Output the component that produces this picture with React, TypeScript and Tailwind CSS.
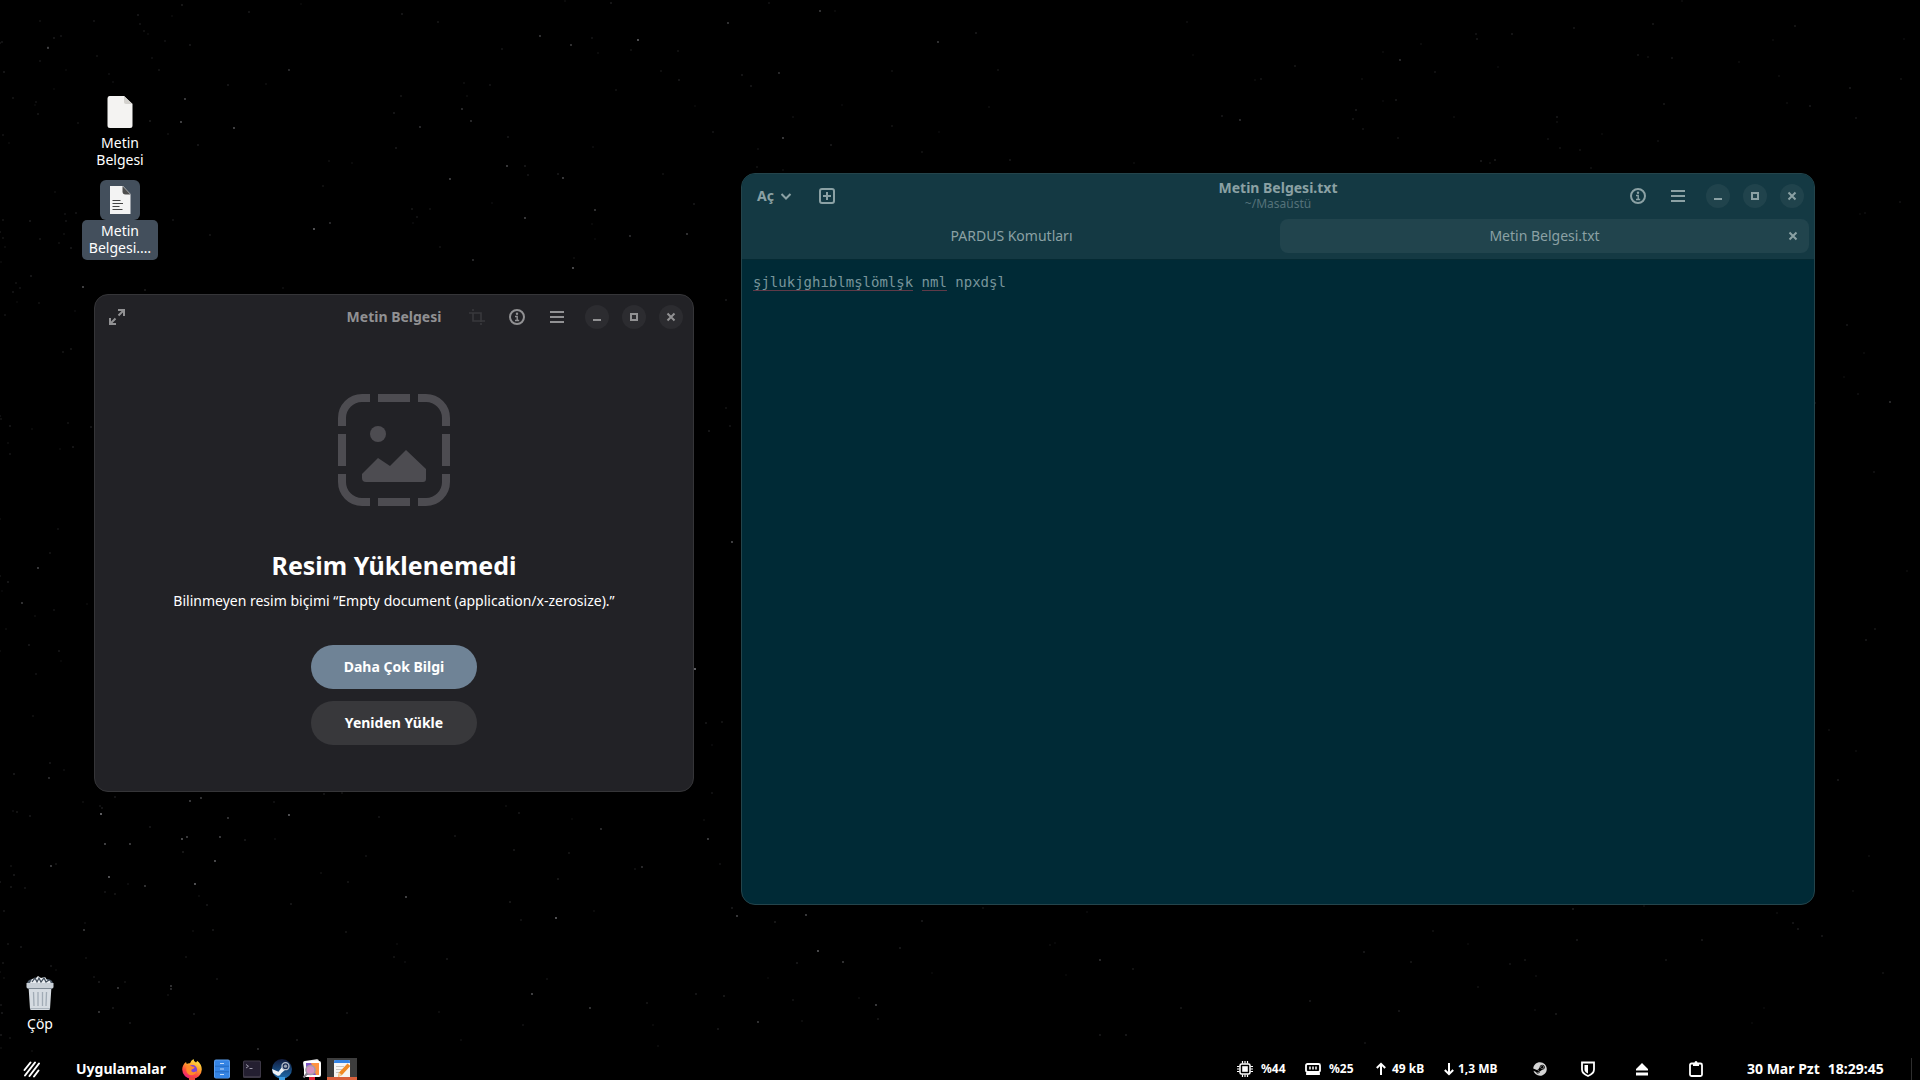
import type { ReactNode } from "react";
import { FaSteam } from "react-icons/fa";

type IconProps = { className?: string };

// x, y, opacity
const BRIGHT_STARS: [number, number, number][] = [
  [48, 48, 0.35], [138, 15, 0.2], [4, 72, 0.2], [190, 45, 0.2], [289, 70, 0.25], [402, 14, 0.2],
  [185, 99, 0.35], [181, 122, 0.4], [234, 128, 0.4], [228, 85, 0.2], [394, 113, 0.2], [420, 127, 0.25],
  [462, 109, 0.25], [471, 121, 0.25], [540, 36, 0.3], [571, 45, 0.3], [638, 40, 0.5], [679, 80, 0.2],
  [728, 23, 0.3], [820, 11, 0.3], [938, 42, 0.3], [779, 73, 0.25], [783, 138, 0.35], [742, 75, 0.2],
  [450, 179, 0.35], [507, 166, 0.35], [563, 178, 0.35], [314, 229, 0.5], [330, 223, 0.25], [525, 218, 0.35],
  [595, 210, 0.3], [630, 236, 0.25], [687, 234, 0.3], [573, 268, 0.45], [473, 260, 0.25], [83, 287, 0.4],
  [101, 814, 0.6], [289, 815, 0.5], [190, 801, 0.35], [201, 798, 0.3], [228, 818, 0.3], [182, 839, 0.45],
  [187, 837, 0.35], [220, 837, 0.35], [105, 844, 0.4], [130, 844, 0.35], [215, 861, 0.45], [51, 866, 0.35],
  [109, 877, 0.5], [195, 884, 0.5], [406, 897, 0.4], [145, 886, 0.3], [84, 930, 0.3], [556, 918, 0.5],
  [737, 916, 0.35], [806, 915, 0.35], [818, 951, 0.45], [843, 962, 0.3], [532, 994, 0.4], [118, 988, 0.3],
  [171, 986, 0.3], [171, 989, 0.25], [99, 1012, 0.3], [758, 1022, 0.3], [590, 1008, 0.3], [876, 1005, 0.35],
  [708, 839, 0.35], [642, 867, 0.25], [601, 829, 0.25], [258, 1049, 0.25], [49, 778, 0.25], [695, 669, 0.6],
  [732, 542, 0.4], [1850, 88, 0.2], [1512, 34, 0.2], [1240, 120, 0.25], [1400, 60, 0.25], [1100, 960, 0.25],
  [1310, 1001, 0.2], [1702, 940, 0.2], [1866, 640, 0.2], [1890, 402, 0.25], [38, 568, 0.35], [22, 603, 0.3],
];

// faint dust between the brighter stars, denser towards the left
function makeDust(count: number): [number, number, number][] {
  let seed = 7;
  const next = () => {
    seed = (seed * 16807) % 2147483647;
    return seed / 2147483647;
  };
  return Array.from({ length: count }, () => [
    Math.floor(Math.pow(next(), 1.6) * 1920),
    Math.floor(next() * 1056),
    0.08 + next() * 0.14,
  ]);
}

const STARS = [...BRIGHT_STARS, ...makeDust(700)];

function StarField() {
  return (
    <svg className="absolute inset-0 h-full w-full" aria-hidden="true">
      {STARS.map(([x, y, o], i) => (
        <circle key={i} cx={x} cy={y} r={o > 0.22 ? 0.9 : 0.8} fill="#e8e8f0" opacity={o} />
      ))}
    </svg>
  );
}

/* ---------- symbolic icons, 16px grid ---------- */

function Symbolic({ children, className = "size-4" }: { children: ReactNode; className?: string }) {
  return (
    <svg viewBox="0 0 16 16" className={className} fill="none" stroke="currentColor" strokeWidth="2" aria-hidden="true">
      {children}
    </svg>
  );
}

const FullscreenIcon = () => (
  <Symbolic>
    <path d="M9 1h6v6M14.5 1.5 9.5 6.5M1 9v6h6M1.5 14.5l5-5" />
  </Symbolic>
);

const CropIcon = () => (
  <Symbolic>
    <path d="M0 4h12v9M4 3.5V12h12M4 0v2M12 14v2" strokeWidth="1.6" />
  </Symbolic>
);

const InfoIcon = () => (
  <Symbolic>
    <circle cx="8" cy="8" r="7" />
    <circle cx="8" cy="4.8" r="1.2" fill="currentColor" stroke="none" />
    <path d="M6 7.5h2.2V12M6 11.5h4.2" strokeWidth="1.4" />
  </Symbolic>
);

const MenuIcon = () => (
  <Symbolic>
    <path d="M1 3h14M1 8h14M1 13h14" />
  </Symbolic>
);

const MinimizeIcon = () => (
  <Symbolic>
    <path d="M4 11h8" />
  </Symbolic>
);

const MaximizeIcon = () => (
  <Symbolic>
    <path d="M5 5h6v6H5z" />
  </Symbolic>
);

const CloseIcon = () => (
  <Symbolic>
    <path d="m4.5 4.5 7 7M11.5 4.5l-7 7" />
  </Symbolic>
);

const ChevronIcon = () => (
  <Symbolic>
    <path d="m3.5 6 4.5 4.5L12.5 6" />
  </Symbolic>
);

const NewTabIcon = () => (
  <Symbolic>
    <rect x="1" y="1" width="14" height="14" rx="2" />
    <path d="M8 4v8M4 8h8" />
  </Symbolic>
);

function MissingImageIcon() {
  return (
    <svg viewBox="0 0 112 112" className="size-28 text-[#4d4c51]" aria-hidden="true">
      <g fill="none" stroke="currentColor" strokeWidth="8">
        <path d="M32 4h-8A20 20 0 0 0 4 24v8M40 4h32M80 4h8a20 20 0 0 1 20 20v8M108 40v32M108 80v8a20 20 0 0 1-20 20h-8M72 108H40M32 108h-8A20 20 0 0 1 4 88v-8M4 72V40" />
      </g>
      <circle cx="40" cy="40" r="8" fill="currentColor" />
      <path d="M24 80 40 64l12 8 16-16 20 19v10q0 3-3 3H28q-4 0-4-4z" fill="currentColor" />
    </svg>
  );
}

/* ---------- desktop icons ---------- */

function BlankFileIcon() {
  return (
    <svg viewBox="0 0 26 32" className="h-8 w-[26px]" aria-hidden="true">
      <path d="M2.500 0H17l8.500 8v21.500a2.500 2.500 0 0 1-2.500 2.500H3a2.500 2.500 0 0 1-2.500-2.500V2.500A2.500 2.500 0 0 1 2.500 0z" fill="#f4f3f2" />
      <path d="M17 0l8.500 8H19a2 2 0 0 1-2-2z" fill="#d3d1ce" />
    </svg>
  );
}

function TextFileIcon() {
  return (
    <svg viewBox="0 0 22 28" className="h-7 w-[22px]" aria-hidden="true">
      <path d="M1 0h13l7.500 8v20H1z" fill="#f3f3f3" />
      <path d="M13.500 0l8 8.500h-5q-3 0-3-3z" fill="#4e4e4e" />
      <path d="M3.500 14.500h8M3.500 17.500h10.500M3.500 20.500h7M3.500 23.500h10" stroke="#444" strokeWidth="1.200" />
    </svg>
  );
}

function TrashIcon() {
  return (
    <svg viewBox="0 0 28 36" className="h-9 w-7" aria-hidden="true">
      <path d="M1 9q0-4 5-5h16q5 1 5 5z" fill="#4d5a68" />
      <path d="M4 8l2-4 4-1 2-2 3 2 4-1 2 3 3 1 1 3z" fill="#e9edf1" />
      <path d="M6 7l3-4 2 4 2-4 2 4 3-4 2 4 3-2" fill="none" stroke="#3f4b58" strokeWidth="1.200" />
      <path d="M2.500 11h23L24 34q0 1-1.500 1h-17Q4 35 4 34z" fill="#d5dbe1" />
      <path d="M.5 8h27v4q0 1.500-2 1.500h-23q-2 0-2-1.500z" fill="#c9d0d7" />
      <path d="M2 13.500h24" stroke="#7d8893" />
      <path d="M7.500 17l.5 14M12 17v14M16.500 17v14M20.500 17l-.5 14" stroke="#a1abb5" strokeWidth="1.300" />
      <path d="M4 33.500h20" stroke="#aab3bc" />
    </svg>
  );
}

/* ---------- panel icons ---------- */

function PardusMenuIcon() {
  return (
    <svg viewBox="0 0 18 18" className="size-[18px]" fill="none" stroke="#fff" strokeWidth="2" strokeLinecap="round" aria-hidden="true">
      <path d="M1.500 10 7.500 2.500M2 15.500 12 2.500M6.500 16 16 3.500M11 16.500l4.500-6" />
    </svg>
  );
}

function FirefoxIcon() {
  return (
    <svg viewBox="0 0 20 20" className="size-5" aria-hidden="true">
      <defs>
        <linearGradient id="ff-body" x1="0.8" y1="0" x2="0.3" y2="1">
          <stop offset="0" stopColor="#fff14a" />
          <stop offset="0.4" stopColor="#ffa22b" />
          <stop offset="0.7" stopColor="#ff4b3e" />
          <stop offset="1" stopColor="#e81c83" />
        </linearGradient>
      </defs>
      <path d="M4 3l.8 2Q6 4 8 4.200 9 1.500 11.500 0q0 2 2.500 3.600 1-.6 1-1.800 4.800 3.500 4.800 8.800a9.800 9.300 0 0 1-19.600 0Q.2 6 4 3z" fill="url(#ff-body)" />
      <circle cx="10.500" cy="10.700" r="4.600" fill="#7b43d8" />
      <path d="M4.500 7q3.500-1.500 5.800.6 1.800.2 2.500 1-1.200 1.600-3.200 1.800-1 2 1 2.700 2.300.5 4-1-.6 4-4.800 4.200Q5 16 4.300 11.500z" fill="#ff8a2a" />
    </svg>
  );
}

function FilesIcon() {
  return (
    <svg viewBox="0 0 20 20" className="size-5" aria-hidden="true">
      <rect x="2" y="0.500" width="16" height="19" rx="2" fill="#5d9fee" />
      <rect x="3" y="1.500" width="14" height="17.500" rx="1" fill="#3584e4" />
      <path d="M3 7.200h14M3 12.800h14" stroke="#2569bd" />
      <path d="M8 4.500h4M8 10h4M8 15.500h4" stroke="#c5dcf7" strokeWidth="1.200" />
    </svg>
  );
}

function TerminalIcon() {
  return (
    <svg viewBox="0 0 20 20" className="size-5" aria-hidden="true">
      <rect x="1" y="1.500" width="18" height="17.500" rx="1.500" fill="#3d3846" />
      <rect x="2" y="2.500" width="16" height="14.500" rx="1" fill="#241f31" />
      <path d="M4 5.500l2.500 1.800L4 9M7.500 9.500h3" stroke="#9a97a8" fill="none" />
    </svg>
  );
}

function ViewerIcon() {
  return (
    <svg viewBox="0 0 20 20" className="size-5" aria-hidden="true">
      <rect x="2" y="1" width="16" height="16" rx="2" fill="#f2f2f2" transform="rotate(-8 10 10)" />
      <rect x="2" y="2" width="17" height="16" rx="2" fill="#fff" />
      <path d="M4 4h13v12H4z" fill="#7d55c7" />
      <path d="M9 4h8v12h-3z" fill="#ff9240" />
      <circle cx="8.500" cy="11" r="4.600" fill="#d48fc0" stroke="#a39aa5" strokeWidth="1.500" />
      <path d="m5 14.500-3.500 4" stroke="#8a828d" strokeWidth="2" />
    </svg>
  );
}

function EditorIcon() {
  return (
    <svg viewBox="0 0 20 20" className="size-5" aria-hidden="true">
      <rect x="2" y="1" width="16" height="18" rx="1.500" fill="#f6f5f4" />
      <path d="M2 4V2.500Q2 1 3.500 1h13Q18 1 18 2.500V4z" fill="#3584e4" />
      <path d="M4 7.500h8M4 10.500h6M4 13.500h4" stroke="#c8c6c3" />
      <path d="M7 13.500 15.500 4.500l2.800 2.500L10 16 6 18z" fill="#f08a24" />
      <path d="m7 13.500 3 2.500L6 18z" fill="#f3cf9c" />
    </svg>
  );
}

function SteamAppIcon() {
  return (
    <svg viewBox="0 0 20 20" className="size-5" aria-hidden="true">
      <defs>
        <linearGradient id="steam-bg" x1="0" y1="0" x2="0" y2="1">
          <stop offset="0" stopColor="#101a3c" />
          <stop offset="1" stopColor="#1f6fb0" />
        </linearGradient>
      </defs>
      <circle cx="10" cy="10" r="10" fill="url(#steam-bg)" />
      <path d="M0 10l6.500 2.800L10 8l4 2-5 4.500q-1 3-4 2L1 14z" fill="#eef2f6" />
      <circle cx="13.500" cy="7.200" r="3.500" fill="#1a2d55" stroke="#b9c1cc" strokeWidth="1.300" />
      <circle cx="13.500" cy="7.200" r="1.600" fill="#9aa6b4" />
    </svg>
  );
}

const CpuIcon = ({ className }: IconProps) => (
  <Symbolic className={className}>
    <rect x="3" y="3" width="10" height="10" rx="1.500" strokeWidth="1.500" />
    <rect x="5.200" y="5.200" width="5.600" height="5.600" fill="currentColor" stroke="none" />
    <path d="M5.500 0v2.500M8 0v2.500M10.500 0v2.500M5.500 13.500V16M8 13.500V16M10.500 13.500V16M0 5.500h2.500M0 8h2.500M0 10.500h2.500M13.500 5.500H16M13.500 8H16M13.500 10.500H16" strokeWidth="1.200" />
  </Symbolic>
);

const MemoryIcon = ({ className }: IconProps) => (
  <Symbolic className={className}>
    <path d="M2.500 3h11Q15 3 15 4.500v5q0 1-1 1.200V13H2v-2.300Q1 10.500 1 9.500v-5Q1 3 2.500 3z" strokeWidth="1.800" />
    <path d="M2 11.500h12" strokeWidth="3" />
    <path d="M5 5.500v3M8 5.500v3M11 5.500v3" strokeWidth="1.500" />
  </Symbolic>
);

const UpIcon = () => (
  <svg viewBox="0 0 10 14" className="h-3.5 w-2.5" fill="none" stroke="currentColor" strokeWidth="2" aria-hidden="true">
    <path d="M5 13V2M.8 6 5 1.800 9.200 6" />
  </svg>
);

const DownIcon = () => (
  <svg viewBox="0 0 10 14" className="h-3.5 w-2.5" fill="none" stroke="currentColor" strokeWidth="2" aria-hidden="true">
    <path d="M5 1v11M.8 8 5 12.200 9.200 8" />
  </svg>
);

const ShieldIcon = () => (
  <Symbolic>
    <path d="M2 1.500h12v7q0 4-6 6.500-6-2.500-6-6.500z" strokeWidth="1.800" />
    <path d="M4.500 4H8v8.500Q4.500 11 4.500 8.500z" fill="currentColor" stroke="none" />
  </Symbolic>
);

const EjectIcon = () => (
  <Symbolic>
    <path d="M8 2 14 8v1.500H2V8zM2 11.500h12v3H2z" fill="currentColor" stroke="none" />
  </Symbolic>
);

const ClipboardIcon = () => (
  <Symbolic>
    <rect x="2" y="2.500" width="12" height="12.500" rx="1.500" strokeWidth="1.800" />
    <path d="M5 2h1.500q0-2 1.500-2t1.500 2H11v3H5z" fill="currentColor" stroke="none" />
  </Symbolic>
);

/* ---------- window parts ---------- */

function HeaderButton({ label, disabled, children }: { label: string; disabled?: boolean; children: ReactNode }) {
  return (
    <button aria-label={label} disabled={disabled} className="flex size-[34px] items-center justify-center rounded-lg disabled:opacity-20">
      {children}
    </button>
  );
}

function WindowControls({ tone }: { tone: string }) {
  return (
    <div className="flex items-center gap-[13px] pr-[10px] pl-[11px]">
      <button aria-label="Simge durumuna küçült" className={`flex size-6 items-center justify-center rounded-full ${tone}`}>
        <MinimizeIcon />
      </button>
      <button aria-label="Ekranı kapla" className={`flex size-6 items-center justify-center rounded-full ${tone}`}>
        <MaximizeIcon />
      </button>
      <button aria-label="Kapat" className={`flex size-6 items-center justify-center rounded-full ${tone}`}>
        <CloseIcon />
      </button>
    </div>
  );
}

function ImageViewerWindow() {
  return (
    <section className="absolute top-[294px] left-[94px] w-[600px] rounded-[14px] border border-[#353538] bg-[#222226] pb-[46px] text-white">
      <header className="relative flex h-11 items-center text-[#919193]">
        <div className="pl-[5px]">
          <HeaderButton label="Tam ekran">
            <FullscreenIcon />
          </HeaderButton>
        </div>
        <h2 className="pointer-events-none absolute inset-x-0 text-center text-sm font-bold">Metin Belgesi</h2>
        <div className="ml-auto flex items-center gap-1.5">
          <HeaderButton label="Kırp" disabled>
            <CropIcon />
          </HeaderButton>
          <HeaderButton label="Resim özellikleri">
            <InfoIcon />
          </HeaderButton>
          <HeaderButton label="Ana menü">
            <MenuIcon />
          </HeaderButton>
        </div>
        <WindowControls tone="bg-[#2c2c30]" />
      </header>

      <div className="flex flex-col items-center pt-[55px]">
        <MissingImageIcon />
        <h1 className="mt-[41px] text-[25px] leading-9 font-bold">Resim Yüklenemedi</h1>
        <p className="mt-2 text-sm leading-5">Bilinmeyen resim biçimi “Empty document (application/x-zerosize).”</p>
        <div className="mt-[34px] flex w-[166px] flex-col gap-3 text-sm font-bold">
          <button className="h-11 rounded-full bg-[#6f8396]">Daha Çok Bilgi</button>
          <button className="h-11 rounded-full bg-[#38383b]">Yeniden Yükle</button>
        </div>
      </div>
    </section>
  );
}

function TextEditorWindow() {
  return (
    <section className="absolute top-[173px] left-[741px] flex h-[732px] w-[1074px] flex-col overflow-hidden rounded-[14px] border border-[#24444b] bg-[#002a36] text-[#8ba1a4]">
      <header className="border-b border-[#052a33] bg-[#143943]">
        <div className="relative flex h-11 items-center">
          <button className="flex items-center gap-1 pl-[15px] text-sm font-bold">
            Aç
            <ChevronIcon />
          </button>
          <div className="pl-4">
            <HeaderButton label="Yeni sekme">
              <NewTabIcon />
            </HeaderButton>
          </div>
          <div className="pointer-events-none absolute inset-x-0 text-center">
            <h2 className="text-sm leading-4 font-bold">Metin Belgesi.txt</h2>
            <p className="text-xs leading-4 text-[#54727a]">~/Masaüstü</p>
          </div>
          <div className="ml-auto flex items-center gap-1.5">
            <HeaderButton label="Belge özellikleri">
              <InfoIcon />
            </HeaderButton>
            <HeaderButton label="Ana menü">
              <MenuIcon />
            </HeaderButton>
          </div>
          <WindowControls tone="bg-[#20434c]" />
        </div>
        <div role="tablist" className="flex gap-1 px-[5px] pt-px pb-1.5 text-sm">
          <button role="tab" aria-selected="false" className="h-[34px] flex-1 rounded-lg">
            PARDUS Komutları
          </button>
          <div className="relative flex-1 rounded-lg bg-[#21444d]">
            <button role="tab" aria-selected="true" className="h-[34px] w-full">
              Metin Belgesi.txt
            </button>
            <button aria-label="Sekmeyi kapat" className="absolute top-[9px] right-2">
              <CloseIcon />
            </button>
          </div>
        </div>
      </header>

      <div className="relative flex-1 font-['DejaVu_Sans_Mono',monospace] text-sm leading-5">
        <textarea
          aria-label="Metin Belgesi.txt"
          spellCheck={false}
          defaultValue="şjlukjghıblmşlömlşk nml npxdşl"
          className="block h-full w-full resize-none bg-transparent px-[11px] py-3 text-[#78959b] outline-none"
        />
        {/* spelling marks under the first two words */}
        <div className="pointer-events-none absolute top-3 left-[11px] flex h-[19px] gap-[1ch]">
          <span className="w-[19ch] border-b border-[#5f3a48]" />
          <span className="w-[3ch] border-b border-[#5f3a48]" />
        </div>
      </div>
    </section>
  );
}

function DesktopIcons() {
  return (
    <>
      <button className="absolute top-24 left-[82px] flex w-[76px] flex-col items-center gap-1.5 text-sm leading-[17px] text-white">
        <BlankFileIcon />
        <span>
          Metin
          <br />
          Belgesi
        </span>
      </button>
      <button className="absolute top-[180px] left-[82px] flex w-[76px] flex-col items-center text-sm leading-[17px] text-white">
        <span className="flex size-10 items-center justify-center rounded-md bg-[#434f5c]">
          <TextFileIcon />
        </span>
        <span className="w-full rounded-[5px] bg-[#434f5c] pt-0.5 pb-1">
          Metin
          <br />
          Belgesi.…
        </span>
      </button>
      <button className="absolute bottom-[26px] left-[13px] flex w-[54px] flex-col items-center gap-1 text-sm leading-[17px] text-white">
        <TrashIcon />
        Çöp
      </button>
    </>
  );
}

const LAUNCHERS = [
  { name: "Firefox", icon: <FirefoxIcon />, mark: "w-1.5 bg-[#e8473a]" },
  { name: "Dosyalar", icon: <FilesIcon />, mark: "" },
  { name: "Uçbirim", icon: <TerminalIcon />, mark: "" },
  { name: "Steam", icon: <SteamAppIcon />, mark: "w-1.5 bg-[#3c9be0]" },
  { name: "Resim Görüntüleyici", icon: <ViewerIcon />, mark: "w-1.5 bg-[#e0263c]" },
  { name: "Metin Düzenleyici", icon: <EditorIcon />, mark: "w-full bg-[#d9603b]", active: true },
];

function Panel() {
  return (
    <footer className="relative flex h-[22px] items-center bg-black text-white">
      <button aria-label="Pardus menüsü" className="pl-[23px]">
        <PardusMenuIcon />
      </button>
      <button className="pl-[35px] text-sm font-bold">Uygulamalar</button>
      <nav className="ml-[11px] flex h-full">
        {LAUNCHERS.map((app) => (
          <button
            key={app.name}
            aria-label={app.name}
            className={`relative flex w-[30px] items-center justify-center ${app.active ? "bg-[#3d3d3d]" : ""}`}
          >
            {app.icon}
            {app.mark && <span className={`absolute bottom-0 h-[3px] ${app.mark}`} />}
          </button>
        ))}
      </nav>

      <div className="ml-auto flex items-center text-xs font-bold whitespace-nowrap">
        <div className="flex w-[68px] items-center gap-2">
          <CpuIcon className="size-4" />
          %44
        </div>
        <div className="flex w-[71px] items-center gap-2">
          <MemoryIcon className="size-4" />
          %25
        </div>
        <div className="flex w-[68px] items-center gap-1.5">
          <UpIcon />
          49 kB
        </div>
        <div className="flex w-[88px] items-center gap-1">
          <DownIcon />
          1,3 MB
        </div>
        <div className="flex items-center gap-[38px]">
          <button aria-label="Steam" className="flex w-4 justify-center text-[#d4d4d4]">
            <FaSteam size={14} />
          </button>
          <button aria-label="Güvenlik duvarı" className="-ml-1.5">
            <ShieldIcon />
          </button>
          <button aria-label="Sürücüyü çıkar">
            <EjectIcon />
          </button>
          <button aria-label="Pano">
            <ClipboardIcon />
          </button>
        </div>
        <button className="flex w-[207px] gap-2 pl-[43px] text-sm leading-5">
          <span>30 Mar Pzt</span>
          <span>18:29:45</span>
        </button>
        <div className="mr-2 h-[22px] w-px bg-[#2e2e2e]" />
      </div>
    </footer>
  );
}

export default function App() {
  return (
    <div className="flex h-screen flex-col overflow-hidden bg-black font-['Noto_Sans',sans-serif]">
      <main className="relative flex-1">
        <StarField />
        <DesktopIcons />
        <ImageViewerWindow />
        <TextEditorWindow />
      </main>
      <Panel />
    </div>
  );
}
